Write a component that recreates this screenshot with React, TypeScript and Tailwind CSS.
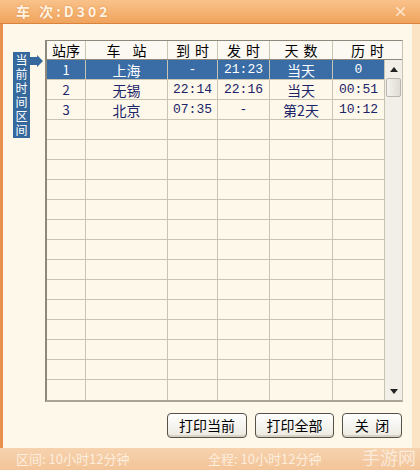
import { X } from 'lucide-react'

const stops = [
  { no: '1', name: '上海', arrive: '-', depart: '21:23', day: '当天', span: '0' },
  { no: '2', name: '无锡', arrive: '22:14', depart: '22:16', day: '当天', span: '00:51' },
  { no: '3', name: '北京', arrive: '07:35', depart: '-', day: '第2天', span: '10:12' },
]

const cols = 'grid grid-cols-[39px_82px_50px_52px_63px_52px]'
const cell = 'flex items-center justify-center border-r border-[#c9c4b2] leading-none'
const mono = { fontFamily: '"Liberation Mono", "Noto Sans CJK SC", monospace' }

function Button({ label, width }: { label: string; width: string }) {
  return (
    <button
      className={`${width} h-[25px] rounded-[4px] border border-[#55524a] bg-gradient-to-b from-white to-[#ebe9e0] text-[14px] text-black shadow-[inset_0_-2px_0_#d6d2c4]`}
    >
      {label}
    </button>
  )
}

export default function App() {
  const blank = Array.from({ length: 17 - stops.length })

  return (
    <div
      className="flex h-[470px] w-[420px] flex-col overflow-hidden bg-[#fdf8ea]"
      style={{ fontFamily: '"Noto Sans CJK SC", sans-serif' }}
    >
      {/* Title bar */}
      <div className="flex h-[24px] shrink-0 items-center justify-between border-b border-[#d9833d] bg-gradient-to-b from-[#f9c28a] to-[#f0a45c] pl-[16px] pr-[12px]">
        <span className="text-[14px] font-bold tracking-[3px] text-[#fff3e4] [text-shadow:0_0_2px_#e08a40]">
          车 次:D302
        </span>
        <X size={15} strokeWidth={2.5} className="text-[#fde6cf]" />
      </div>

      <div className="flex flex-1 border-l-[3px] border-r-[8px] border-l-[#e8914c] border-r-[#fbe3c6]">
        <div className="flex flex-1 flex-col">
          <div className="flex pt-[16px]">
            {/* Current interval marker */}
            <div className="flex w-[42px] shrink-0 pl-[10px] pt-[12px]">
              <div className="flex h-[86px] w-[17px] justify-center bg-[#35689c] pt-[1px] text-[12px] leading-[17px] tracking-[2px] text-white [writing-mode:vertical-rl]">
                当前时间区间
              </div>
              <svg width="13" height="12" viewBox="0 0 13 12" className="mt-[3px]">
                <path d="M0 2 H7 V0 L13 6 L7 12 V10 H0 Z" fill="#35689c" />
              </svg>
            </div>

            {/* Timetable */}
            <div className="w-[358px] border-l-2 border-t border-b-2 border-r border-l-[#8d897c] border-t-[#8d897c] border-b-[#a8a497] border-r-[#c9c4b2]">
              <div className="flex h-[19px] border-b border-[#8d897c] bg-[#fbf9f2] text-[14px] text-black">
                <div className={`${cell} w-[39px]`}>站序</div>
                <div className={`${cell} w-[82px] tracking-[12px] pl-[12px]`}>车站</div>
                <div className={`${cell} w-[50px] tracking-[5px] pl-[5px]`}>到时</div>
                <div className={`${cell} w-[52px] tracking-[5px] pl-[5px]`}>发时</div>
                <div className={`${cell} w-[63px] tracking-[5px] pl-[5px]`}>天数</div>
                <div className="flex flex-1 items-center justify-center tracking-[5px] pl-[5px] leading-none">历时</div>
              </div>
              <div className="flex">
                <div className="flex flex-col">
                  {stops.map((s, i) => (
                    <div
                      key={s.no}
                      className={`${cols} h-[20px] border-b border-[#c9c4b2] text-[13px] ${
                        i === 0 ? 'bg-[#3a6ca6] text-white' : 'text-[#1b2468]'
                      }`}
                    >
                      <div className={cell}>{s.no}</div>
                      <div className={`${cell} text-[14px]`}>{s.name}</div>
                      <div className={cell} style={mono}>{s.arrive}</div>
                      <div className={cell} style={mono}>{s.depart}</div>
                      <div className={`${cell} text-[14px]`}>{s.day}</div>
                      <div className={cell} style={mono}>{s.span}</div>
                    </div>
                  ))}
                  {blank.map((_, i) => (
                    <div key={i} className={`${cols} h-[20px] border-b border-[#c9c4b2] last:border-b-0`}>
                      <div className={cell} />
                      <div className={cell} />
                      <div className={cell} />
                      <div className={cell} />
                      <div className={cell} />
                      <div className={cell} />
                    </div>
                  ))}
                </div>

                {/* Scrollbar */}
                <div className="flex w-[18px] flex-col bg-[#f1efe8]">
                  <div className="flex h-[18px] items-center justify-center">
                    <svg width="8" height="5" viewBox="0 0 8 5">
                      <path d="M0 5 L4 0 L8 5 Z" fill="#222" />
                    </svg>
                  </div>
                  <div className="mx-[1px] h-[19px] rounded-[2px] border border-[#b7b5ad] bg-gradient-to-r from-[#f4f3ef] to-[#dedcd3]" />
                  <div className="flex-1" />
                  <div className="flex h-[18px] items-center justify-center">
                    <svg width="8" height="5" viewBox="0 0 8 5">
                      <path d="M0 0 L8 0 L4 5 Z" fill="#222" />
                    </svg>
                  </div>
                </div>
              </div>
            </div>
          </div>

          {/* Actions */}
          <div className="mt-[11px] flex justify-end gap-[8px] pr-[10px]">
            <Button label="打印当前" width="w-[80px]" />
            <Button label="打印全部" width="w-[79px]" />
            <Button label="关  闭" width="w-[60px] whitespace-pre" />
          </div>
        </div>
      </div>

      {/* Status bar */}
      <div className="relative flex h-[22px] shrink-0 items-center bg-gradient-to-b from-[#f6d2ae] to-[#f3c498] text-[13px] text-[#fdeede]">
        <span className="w-[200px] pl-[16px]">区间: 10小时12分钟</span>
        <span className="pl-[8px]">全程: 10小时12分钟</span>
        <span className="absolute right-[4px] top-[-2px] text-[18px] leading-[22px] text-white/60">手游网</span>
      </div>
    </div>
  )
}
